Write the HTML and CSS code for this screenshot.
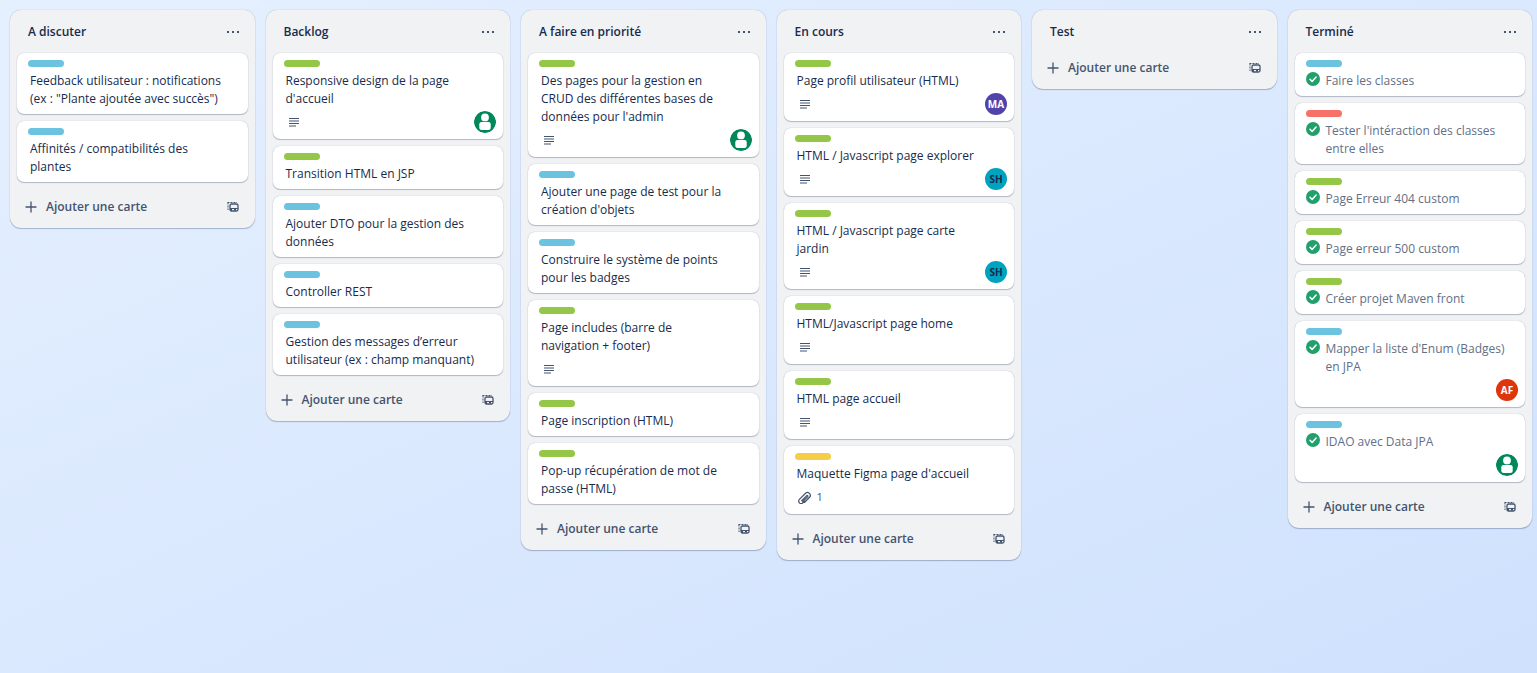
FILE: index.html
```html
<!DOCTYPE html>
<html lang="fr">
<head>
<meta charset="utf-8">
<title>Tableau</title>
<link rel="stylesheet" href="styles.css">
</head>
<body>
<svg class="sprite" aria-hidden="true">
  <symbol id="dots" viewBox="0 0 14 14"><path d="M1 6h2v2H1zM6 6h2v2H6zM11 6h2v2h-2z" fill="currentColor"/></symbol>
  <symbol id="plus" viewBox="0 0 14 14"><path d="M7 2v10M2 7h10" stroke="currentColor" stroke-width="1.3" stroke-linecap="round" fill="none"/></symbol>
  <symbol id="template" viewBox="0 0 14 14"><g fill="none" stroke="currentColor"><path d="M1.500 2.500H11" stroke-dasharray="2 1"/><path d="M2 2.500V10" stroke-dasharray="2 1"/><rect x="4" y="4" width="8" height="7" rx="1.500" stroke-width="1.300"/></g><path d="M4 8h8v1H4zM4 8h2v3H4zM8 9h2v1.500H8z" fill="currentColor"/></symbol>
  <symbol id="lines" viewBox="0 0 14 14"><path d="M2 3.500h10M2 6h10M2 8.500h10M2 11h7" stroke="currentColor" stroke-width="1.200" fill="none"/></symbol>
  <symbol id="clip" viewBox="3 2 19 19"><path d="M11.600 17.400 9.600 19.400a3.300 3.300 0 0 1-4.700 0 3.300 3.300 0 0 1 0-4.700l8.300-8.300a3.900 3.900 0 0 1 5.500 5.500l-7 7M8 16.500l6.800-6.800a1 1 0 0 1 1.400 1.400l-6.800 6.800" fill="none" stroke="currentColor" stroke-width="1.700" stroke-linecap="round"/></symbol>
  <symbol id="check" viewBox="0 0 14 14"><circle cx="7" cy="7" r="7" fill="#22a06b"/><path d="M4 7.300l2.100 2.100L10.100 5" fill="none" stroke="#fff" stroke-width="1.500" stroke-linecap="round" stroke-linejoin="round"/></symbol>
  <symbol id="person" viewBox="0 0 22 22"><circle cx="11" cy="11" r="11" fill="#00875a"/><circle cx="11" cy="6.400" r="3.900" fill="#fff"/><path d="M7.500 11h7a2.200 2.200 0 0 1 2.200 2.200v3.300a2.500 2.500 0 0 1-2.500 2.500H7.800a2.500 2.500 0 0 1-2.500-2.500v-3.300A2.200 2.200 0 0 1 7.500 11z" fill="#fff"/></symbol>
</svg>
<main class="board" id="board"></main>
<script src="board.js"></script>
</body>
</html>
```
FILE: styles.css
```css
* { box-sizing: border-box; }
body {
  margin: 0;
  min-height: 100vh;
  font-family: "Segoe UI", "Open Sans", "Noto Sans", sans-serif;
  font-size: 12px;
  line-height: 18px;
  color: #172b4d;
  background: linear-gradient(to bottom right, #e5f0ff, #cfe1fd);
}
.sprite { display: none; }
.board {
  display: grid;
  grid-template-columns: repeat(6, minmax(0, 1fr));
  gap: 11px;
  align-items: start;
  padding: 10px 5px 10px 10px;
}
.list {
  background: #f1f2f4;
  border-radius: 11px;
  box-shadow: 0 1px 1px #091e4240, 0 0 1px #091e424f;
}
.list-header {
  display: flex;
  align-items: center;
  justify-content: space-between;
  height: 41px;
  padding: 8px 15px 5px 18px;
}
.list-title { margin: 0; font-size: 12px; font-weight: 600; }
button {
  font: inherit;
  color: inherit;
  background: none;
  border: 0;
  padding: 0;
  cursor: pointer;
}
.icon { display: block; width: 14px; height: 14px; }
.icon-button { color: #44546f; }
.cards {
  list-style: none;
  margin: 0;
  padding: 2px 7px 8px;
  display: flex;
  flex-direction: column;
  gap: 7px;
}
.cards:empty { padding: 0; }
.card {
  background: #fff;
  border-radius: 7px;
  padding: 7px 7px 6px 11px;
  box-shadow: 0 1px 1px #091e4240, 0 0 1px #091e424f;
}
.label { width: 36px; height: 7px; border-radius: 4px; margin-bottom: 5px; }
.blue { background: #6cc3e0; }
.green { background: #94c748; }
.yellow { background: #f5cd47; }
.red { background: #f87168; }
.card-body { display: flex; gap: 6px; padding: 0 18px 0 2px; }
.card-body .icon { flex: none; }
.card-title { margin: 0; font-size: 12px; font-weight: 400; }
.done .card-body { padding: 0 12px 0 0; }
.done .card-title { color: #626f86; }
.card-footer {
  display: flex;
  align-items: center;
  padding: 3px 0 0 3px;
  min-height: 25px;
  color: #44546f;
}
.badge { display: flex; align-items: center; gap: 5px; font-size: 11px; }
.avatar {
  width: 22px;
  height: 22px;
  border-radius: 50%;
  margin-left: auto;
  font-size: 10px;
  line-height: 22px;
  font-weight: 700;
  text-align: center;
}
.purple { background: #5243aa; color: #fff; }
.teal { background: #00a3bf; color: #172b4d; }
.orange { background: #de350b; color: #fff; }
.list-footer {
  display: flex;
  align-items: center;
  justify-content: space-between;
  height: 38px;
  padding: 0 15px 5px 14px;
  color: #44546f;
}
.add { display: flex; align-items: center; gap: 8px; font-weight: 600; }
```
FILE: board.js
```js
const lists = [
  ["A discuter", [
    ["blue", "Feedback utilisateur : notifications (ex : \"Plante ajoutée avec succès\")"],
    ["blue", "Affinités / compatibilités des plantes"]]],
  ["Backlog", [
    ["green", "Responsive design de la page d'accueil", {text: 1, who: "person"}],
    ["green", "Transition HTML en JSP"],
    ["blue", "Ajouter DTO pour la gestion des données"],
    ["blue", "Controller REST"],
    ["blue", "Gestion des messages d’erreur utilisateur (ex : champ manquant)"]]],
  ["A faire en priorité", [
    ["green", "Des pages pour la gestion en CRUD des différentes bases de données pour l'admin", {text: 1, who: "person"}],
    ["blue", "Ajouter une page de test pour la création d'objets"],
    ["blue", "Construire le système de points pour les badges"],
    ["green", "Page includes (barre de navigation&nbsp;+ footer)", {text: 1}],
    ["green", "Page inscription (HTML)"],
    ["green", "Pop-up récupération de mot de passe (HTML)"]]],
  ["En cours", [
    ["green", "Page profil utilisateur (HTML)", {text: 1, who: "MA", color: "purple"}],
    ["green", "HTML / Javascript page explorer", {text: 1, who: "SH", color: "teal"}],
    ["green", "HTML / Javascript page carte jardin", {text: 1, who: "SH", color: "teal"}],
    ["green", "HTML/Javascript page home", {text: 1}],
    ["green", "HTML page accueil", {text: 1}],
    ["yellow", "Maquette Figma page d'accueil", {files: 1}]]],
  ["Test", []],
  ["Terminé", [
    ["blue", "Faire les classes"],
    ["red", "Tester l'intéraction des classes entre elles"],
    ["green", "Page Erreur 404 custom"],
    ["green", "Page erreur 500 custom"],
    ["green", "Créer projet Maven front"],
    ["blue", "Mapper la liste d'Enum (Badges) en JPA", {who: "AF", color: "orange"}],
    ["blue", "IDAO avec Data JPA", {who: "person"}]], true]
];

const icon = (name, cls = "icon") => `<svg class="${cls}" aria-hidden="true"><use href="#${name}"/></svg>`;

function footer(extra) {
  if (!extra) return "";
  let html = "";
  if (extra.text) html += `<span class="badge">${icon("lines")}</span>`;
  if (extra.files) html += `<span class="badge">${icon("clip")}<span>${extra.files}</span></span>`;
  if (extra.who === "person") html += icon("person", "avatar");
  else if (extra.who) html += `<span class="avatar ${extra.color}">${extra.who}</span>`;
  return `<div class="card-footer">${html}</div>`;
}

document.getElementById("board").innerHTML = lists.map(([title, cards, done]) => `
<section class="list${done ? " done" : ""}">
  <header class="list-header"><h2 class="list-title">${title}</h2>
    <button class="icon-button" aria-label="Actions de la liste">${icon("dots")}</button></header>
  <ul class="cards">${cards.map(([color, text, extra]) => `<li class="card">
    <div class="label ${color}"></div>
    <div class="card-body">${done ? icon("check") : ""}<h3 class="card-title">${text}</h3></div>
    ${footer(extra)}</li>`).join("")}</ul>
  <footer class="list-footer"><button class="add">${icon("plus")}<span>Ajouter une carte</span></button>
    <button class="icon-button" aria-label="Créer à partir d'un modèle">${icon("template")}</button></footer>
</section>`).join("");
```
